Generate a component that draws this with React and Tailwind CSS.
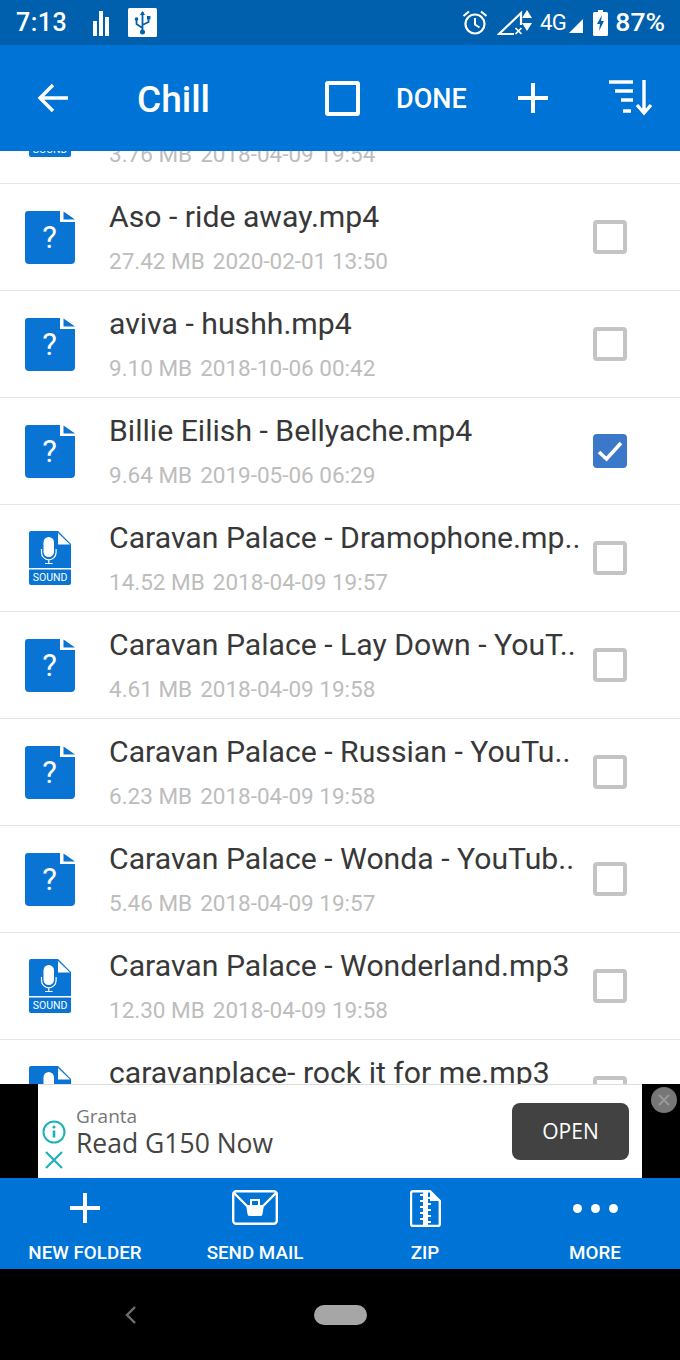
const files = [
  { name: 'Caravan Palace - Bonus.mp3', meta: ['3.76 MB', '2018-04-09 19:54'], type: 'sound' },
  { name: 'Aso - ride away.mp4', meta: ['27.42 MB', '2020-02-01 13:50'], type: 'unknown' },
  { name: 'aviva - hushh.mp4', meta: ['9.10 MB', '2018-10-06 00:42'], type: 'unknown' },
  { name: 'Billie Eilish - Bellyache.mp4', meta: ['9.64 MB', '2019-05-06 06:29'], type: 'unknown', checked: true },
  { name: 'Caravan Palace - Dramophone.mp..', meta: ['14.52 MB', '2018-04-09 19:57'], type: 'sound' },
  { name: 'Caravan Palace - Lay Down - YouT..', meta: ['4.61 MB', '2018-04-09 19:58'], type: 'unknown' },
  { name: 'Caravan Palace - Russian - YouTu..', meta: ['6.23 MB', '2018-04-09 19:58'], type: 'unknown' },
  { name: 'Caravan Palace - Wonda - YouTub..', meta: ['5.46 MB', '2018-04-09 19:57'], type: 'unknown' },
  { name: 'Caravan Palace - Wonderland.mp3', meta: ['12.30 MB', '2018-04-09 19:58'], type: 'sound' },
  { name: 'caravanplace- rock it for me.mp3', meta: ['3.10 MB', '2018-04-09 19:58'], type: 'sound' },
];

const UnknownIcon = () => (
  <svg width="50" height="53" viewBox="0 0 50 53">
    <path d="M3 0H35V11H50V49a4 4 0 0 1-4 4H4a4 4 0 0 1-4-4V3a3 3 0 0 1 3-3Z" fill="#0a74d4" />
    <path d="M38.500 0.500 50 8.500H38.500Z" fill="#0a74d4" />
    <text x="24.500" y="37" textAnchor="middle" fontSize="31" fill="#fff" fontFamily="Roboto, sans-serif">?</text>
  </svg>
);

const SoundIcon = () => (
  <svg width="42" height="54" viewBox="0 0 42 54">
    <path d="M2 0H29L42 13V52a2 2 0 0 1-2 2H2a2 2 0 0 1-2-2V2a2 2 0 0 1 2-2Z" fill="#0a74d4" />
    <path d="M29 2 41 13.500H29Z" fill="#fff" />
    <rect x="14.500" y="6" width="10.500" height="20" rx="5.250" fill="#fff" />
    <path d="M12.500 18v3.500a7.300 7.300 0 0 0 14.600 0V18M19.800 29v3M16 32.500h7.600" fill="none" stroke="#fff" strokeWidth="1.200" />
    <rect x="0" y="37" width="42" height="1.500" fill="#fff" />
    <text x="21" y="50" textAnchor="middle" fontSize="10.500" fill="#fff" fontFamily="Roboto, sans-serif">SOUND</text>
  </svg>
);

const Checkbox = ({ checked }) =>
  checked ? (
    <div className="w-[34px] h-[34px] rounded-[4px] bg-[#3b78c9] flex items-center justify-center">
      <svg width="28" height="24" viewBox="0 0 28 24">
        <path d="M3 13l7.500 7L25 4" fill="none" stroke="#fff" strokeWidth="3.600" />
      </svg>
    </div>
  ) : (
    <div className="w-[34px] h-[34px] rounded-[4px] border-[4px] border-[#c4c4c4] bg-white" />
  );

const FileRow = ({ file }) => (
  <div className="h-[107px] shrink-0 flex items-center border-b border-[#e4e4e4] bg-white">
    <div className="w-[100px] shrink-0 flex justify-center">
      {file.type === 'sound' ? <SoundIcon /> : <UnknownIcon />}
    </div>
    <div className="flex-1 min-w-0 pl-[9px] mt-[1px]">
      <div className="text-[30.2px] leading-[34px] text-[#383838] whitespace-nowrap">{file.name}</div>
      <div className="mt-[13px] text-[22.5px] leading-[28px] text-[#bdbdbd] whitespace-nowrap flex gap-[8px]">
        <span>{file.meta[0]}</span>
        <span>{file.meta[1]}</span>
      </div>
    </div>
    <div className="w-[87px] shrink-0 pr-[53px]">
      <Checkbox checked={file.checked} />
    </div>
  </div>
);

const BottomAction = ({ label, children }) => (
  <div className="w-[170px] flex flex-col items-center">
    <div className="h-[46px] flex items-center justify-center">{children}</div>
    <div className="mt-[11px] text-[18.8px] leading-[22px] font-medium text-white">{label}</div>
  </div>
);

export default function App() {
  return (
    <div className="w-[680px] h-[1360px] flex flex-col overflow-hidden bg-white font-['Roboto',sans-serif]">
      {/* status bar */}
      <div className="h-[45px] shrink-0 bg-[#0060ae] flex items-center text-white pl-[16px] pr-[15px]">
        <span className="text-[25px] font-medium tracking-[0.5px]">7:13</span>
        <svg className="ml-[25px]" width="18" height="28" viewBox="0 0 18 28">
          <rect x="1" y="12" width="4" height="15" fill="#fff" />
          <rect x="7" y="2" width="4" height="25" fill="#fff" />
          <rect x="13" y="8" width="4" height="19" fill="#fff" />
        </svg>
        <svg className="ml-[18px]" width="29" height="29" viewBox="0 0 29 29">
          <rect width="29" height="29" rx="1.500" fill="#fff" />
          <path d="M14.500 4v19M14.500 20l-6-4v-4M14.500 17l6-3v-3" fill="none" stroke="#0060ae" strokeWidth="1.800" />
          <path d="M14.500 3l-2.500 4h5Z" fill="#0060ae" />
          <circle cx="14.500" cy="24" r="2.500" fill="#0060ae" />
          <circle cx="8.500" cy="11" r="1.800" fill="#0060ae" />
          <rect x="19" y="8" width="3.400" height="3.400" fill="#0060ae" />
        </svg>
        <div className="flex-1" />
        <svg width="26" height="26" viewBox="0 0 26 26">
          <circle cx="13" cy="14" r="9.500" fill="none" stroke="#fff" strokeWidth="2.200" />
          <path d="M13 8v6.500l4.500 3" fill="none" stroke="#fff" strokeWidth="2" />
          <path d="M1.500 6 7 1.500M24.500 6 19 1.500" fill="none" stroke="#fff" strokeWidth="2.200" />
        </svg>
        <svg className="ml-[9px]" width="36" height="26" viewBox="0 0 36 26">
          <path d="M2 24 24 3v21Z" fill="none" stroke="#fff" strokeWidth="2.200" />
          <rect x="17" y="15" width="12" height="11" fill="#0060ae" />
          <path d="M18.500 18l6 6M24.500 18l-6 6" stroke="#fff" strokeWidth="1.700" />
          <path d="M30 0l5 8H25ZM30 21l5-8H25Z" fill="#fff" />
        </svg>
        <span className="ml-[7px] text-[22px] tracking-[-0.5px]">4G</span>
        <svg className="ml-[3px] mt-[6px]" width="14" height="15" viewBox="0 0 14 15">
          <path d="M0 15 14 1v14Z" fill="#fff" />
        </svg>
        <svg className="ml-[10px]" width="15" height="26" viewBox="0 0 15 26">
          <path d="M5 0h5v2h3.500a1.500 1.500 0 0 1 1.500 1.500V24.500a1.500 1.500 0 0 1-1.500 1.500H1.500A1.500 1.500 0 0 1 0 24.500V3.500A1.500 1.500 0 0 1 1.500 2H5Z" fill="#fff" />
          <path d="M9 5 4 14h3l-1 7 5-10H8Z" fill="#0060ae" />
        </svg>
        <span className="ml-[7px] text-[26.5px] font-medium leading-none">87%</span>
      </div>

      {/* toolbar */}
      <div className="h-[106px] shrink-0 bg-[#0073d6] flex items-center text-white relative z-10">
        <svg className="ml-[37px] shrink-0" width="32" height="30" viewBox="0 0 32 30">
          <path d="M31 15H3M16 2 3 15l13 13" fill="none" stroke="#fff" strokeWidth="3.400" />
        </svg>
        <span className="ml-[68px] mt-[3px] text-[37px] font-medium leading-none w-[73px]">Chill</span>
        <div className="ml-[115px] w-[35px] h-[35px] rounded-[3px] border-[4px] border-white shrink-0" />
        <span className="ml-[36px] mt-[3px] text-[27px] font-medium leading-none w-[70px]">DONE</span>
        <svg className="ml-[51px] shrink-0" width="32" height="32" viewBox="0 0 32 32">
          <path d="M16 1v30M1 16h30" stroke="#fff" strokeWidth="4" />
        </svg>
        <svg className="ml-[59px] shrink-0" width="46" height="36" viewBox="0 0 46 36">
          <path d="M1 2h24M7 11h18M13 20h12M15 31h8" stroke="#fff" strokeWidth="3.400" />
          <path d="M36 0v32M29 25l7 8 7-8" fill="none" stroke="#fff" strokeWidth="3.400" />
        </svg>
      </div>

      {/* file list */}
      <div className="flex-1 min-h-0 overflow-hidden">
        <div className="-mt-[74px] flex flex-col">
          {files.map((file) => (
            <FileRow key={file.name} file={file} />
          ))}
        </div>
      </div>

      {/* ad banner */}
      <div className="h-[94px] shrink-0 bg-black flex relative">
        <div className="ml-[38px] w-[604px] bg-white border-t border-[#dddddd] flex items-center relative">
          <div className="w-[32px] shrink-0 flex flex-col items-center mt-[26px]">
            <svg width="24" height="24" viewBox="0 0 24 24">
              <circle cx="12" cy="12" r="10.500" fill="none" stroke="#1eb2b8" strokeWidth="2" />
              <path d="M12 10.500v7" stroke="#1eb2b8" strokeWidth="2.600" />
              <circle cx="12" cy="7" r="1.600" fill="#1eb2b8" />
            </svg>
            <svg className="mt-[6px]" width="20" height="20" viewBox="0 0 20 20">
              <path d="M2 2l16 16M18 2 2 18" stroke="#1eb2b8" strokeWidth="2.200" />
            </svg>
          </div>
          <div className="ml-[6px] flex-1 min-w-0">
            <div className="text-[19px] leading-[22px] text-[#777777] font-['Open_Sans',sans-serif]">Granta</div>
            <div className="mt-[1px] text-[26.5px] leading-[30px] font-medium text-[#444444] font-['Open_Sans',sans-serif]">Read G150 Now</div>
          </div>
          <div className="mr-[13px] w-[117px] h-[57px] rounded-[8px] bg-[#424242] flex items-center justify-center text-white text-[21px] font-['Open_Sans',sans-serif]">OPEN</div>
        </div>
        <div className="absolute right-[3px] top-[3px] w-[26px] h-[26px] rounded-full bg-[#777777] flex items-center justify-center">
          <svg width="14" height="14" viewBox="0 0 14 14">
            <path d="M2 2l10 10M12 2 2 12" stroke="#999999" strokeWidth="2" />
          </svg>
        </div>
      </div>

      {/* bottom actions */}
      <div className="h-[91px] shrink-0 bg-[#0073d6] flex pt-[7px]">
        <BottomAction label="NEW FOLDER">
          <svg width="32" height="32" viewBox="0 0 32 32">
            <path d="M16 1v30M1 16h30" stroke="#fff" strokeWidth="4" />
          </svg>
        </BottomAction>
        <BottomAction label="SEND MAIL">
          <svg width="46" height="36" viewBox="0 0 46 36">
            <rect x="1.200" y="1.200" width="43.600" height="32.600" rx="3" fill="none" stroke="#fff" strokeWidth="2.400" />
            <path d="M2 3l13 13M44 3 31 16" stroke="#fff" strokeWidth="2.400" />
            <path d="M14 15h18l-1.500 9a2 2 0 0 1-2 2H17.500a2 2 0 0 1-2-2Z" fill="#fff" />
            <rect x="19" y="10" width="8" height="6" fill="none" stroke="#fff" strokeWidth="2" />
          </svg>
        </BottomAction>
        <BottomAction label="ZIP">
          <svg width="31" height="37" viewBox="0 0 31 37">
            <path d="M3 1.200h17L29.800 11v23a2 2 0 0 1-2 2H3a2 2 0 0 1-2-2V3a2 2 0 0 1 2-1.800Z" fill="none" stroke="#fff" strokeWidth="2.400" />
            <path d="M20 1.500V11h9.500Z" fill="#fff" />
            <rect x="13" y="2" width="5" height="33" fill="#fff" />
            <path d="M10 5h3M18 8h3M10 11h3M18 14h3M10 17h3M18 20h3M10 23h3M18 26h3M10 29h3M18 32h3" stroke="#fff" strokeWidth="1.800" />
          </svg>
        </BottomAction>
        <BottomAction label="MORE">
          <div className="flex gap-[9px]">
            <div className="w-[9px] h-[9px] rounded-full bg-white" />
            <div className="w-[9px] h-[9px] rounded-full bg-white" />
            <div className="w-[9px] h-[9px] rounded-full bg-white" />
          </div>
        </BottomAction>
      </div>

      {/* nav bar */}
      <div className="h-[91px] shrink-0 bg-black flex items-center pl-[124px]">
        <svg width="13" height="20" viewBox="0 0 13 20">
          <path d="M11 2 3 10l8 8" fill="none" stroke="#6f6f6f" strokeWidth="2.400" />
        </svg>
        <div className="ml-[177px] w-[53px] h-[20px] rounded-full bg-[#a6a6a6]" />
      </div>
    </div>
  );
}
